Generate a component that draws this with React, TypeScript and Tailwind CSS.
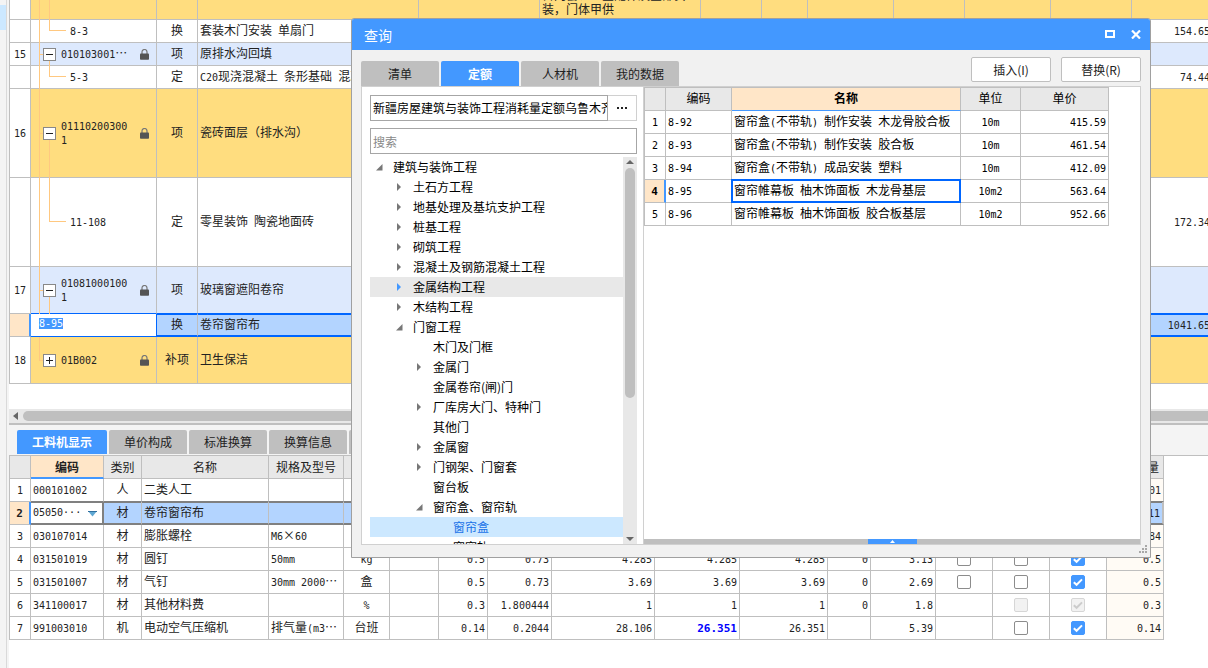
import React, { useEffect, useRef } from "react";
import clsx from "clsx";

type Tree = "guides" | "child" | "group" | "last";

interface BudgetRow {
  no: string;
  code: string;
  kind: string;
  name: string;
  price?: string;
  tree: Tree;
  open?: boolean;
  color: string;
  height: string;
}

const budgetRows: BudgetRow[] = [
  { no: "", code: "8-3", kind: "换", name: "套装木门安装 单扇门", price: "154.65", tree: "child", color: "bg-white", height: "h-[23px]" },
  { no: "15", code: "010103001…", kind: "项", name: "原排水沟回填", tree: "group", open: true, color: "bg-[#dde9fd]", height: "h-[23px]" },
  { no: "", code: "5-3", kind: "定", name: "C20现浇混凝土 条形基础 混凝土", price: "74.44", tree: "child", color: "bg-white", height: "h-[23px]" },
  { no: "16", code: "011102003001", kind: "项", name: "瓷砖面层（排水沟）", tree: "group", open: true, color: "bg-[#ffdd7f]", height: "h-[89px]" },
  { no: "", code: "11-108", kind: "定", name: "零星装饰 陶瓷地面砖", price: "172.34", tree: "child", color: "bg-white", height: "h-[89px]" },
  { no: "17", code: "010810001001", kind: "项", name: "玻璃窗遮阳卷帘", tree: "group", open: true, color: "bg-[#dde9fd]", height: "h-[47px]" },
];

const lastBudgetRow: BudgetRow = {
  no: "18", code: "01B002", kind: "补项", name: "卫生保洁", tree: "last", open: false, color: "bg-[#ffdd7f]", height: "h-[47px]",
};

const treeNodes = [
  { level: 0, label: "建筑与装饰工程", state: "open" },
  { level: 1, label: "土石方工程", state: "closed" },
  { level: 1, label: "地基处理及基坑支护工程", state: "closed" },
  { level: 1, label: "桩基工程", state: "closed" },
  { level: 1, label: "砌筑工程", state: "closed" },
  { level: 1, label: "混凝土及钢筋混凝土工程", state: "closed" },
  { level: 1, label: "金属结构工程", state: "closed", hover: true },
  { level: 1, label: "木结构工程", state: "closed" },
  { level: 1, label: "门窗工程", state: "open" },
  { level: 2, label: "木门及门框", state: "leaf" },
  { level: 2, label: "金属门", state: "closed" },
  { level: 2, label: "金属卷帘(闸)门", state: "leaf" },
  { level: 2, label: "厂库房大门、特种门", state: "closed" },
  { level: 2, label: "其他门", state: "leaf" },
  { level: 2, label: "金属窗", state: "closed" },
  { level: 2, label: "门钢架、门窗套", state: "closed" },
  { level: 2, label: "窗台板", state: "leaf" },
  { level: 2, label: "窗帘盒、窗帘轨", state: "open" },
  { level: 3, label: "窗帘盒", state: "leaf", selected: true },
  { level: 3, label: "窗帘轨", state: "leaf" },
];

const indents = ["pl-[5px]", "pl-[25px]", "pl-[45px]", "pl-[65px]"];

const quotaRows = [
  { code: "8-92", name: "窗帘盒(不带轨) 制作安装 木龙骨胶合板", unit: "10m", price: "415.59" },
  { code: "8-93", name: "窗帘盒(不带轨) 制作安装 胶合板", unit: "10m", price: "461.54" },
  { code: "8-94", name: "窗帘盒(不带轨) 成品安装 塑料", unit: "10m", price: "412.09" },
  { code: "8-95", name: "窗帘帷幕板 柚木饰面板 木龙骨基层", unit: "10m2", price: "563.64" },
  { code: "8-96", name: "窗帘帷幕板 柚木饰面板 胶合板基层", unit: "10m2", price: "952.66" },
];

const materialHeaders = [
  "编码", "类别", "名称", "规格及型号", "单位", "损耗率", "含量", "数量", "含税预算价",
  "不含税市场价", "含税市场价", "税率", "合价", "是否暂估", "锁定数量", "是否计价", "原始含量",
];

// numbers: 含量 .. 合价; checks: "" none, 0 off, 1 on, d0 / d1 disabled
const materialRows = [
  { code: "000101002", kind: "人", name: "二类人工", spec: "", unit: "工日", nums: ["", "", "", "", "", "", ""], checks: ["", "0", "1"], origin: "1.01" },
  { code: "05050···", kind: "材", name: "卷帘窗帘布", spec: "", unit: "m2", nums: ["", "", "", "", "", "", ""], checks: ["0", "0", "1"], origin: "1.11" },
  { code: "030107014", kind: "材", name: "膨胀螺栓", spec: "M6×60", unit: "套", nums: ["", "", "", "", "", "", ""], checks: ["0", "0", "1"], origin: "1.84" },
  { code: "031501019", kind: "材", name: "圆钉", spec: "50mm", unit: "kg", nums: ["0.5", "0.73", "4.285", "4.285", "4.285", "0", "3.13"], checks: ["0", "0", "1"], origin: "0.5" },
  { code: "031501007", kind: "材", name: "气钉", spec: "30mm 2000…", unit: "盒", nums: ["0.5", "0.73", "3.69", "3.69", "3.69", "0", "2.69"], checks: ["0", "0", "1"], origin: "0.5" },
  { code: "341100017", kind: "材", name: "其他材料费", spec: "", unit: "%", nums: ["0.3", "1.800444", "1", "1", "1", "0", "1.8"], checks: ["", "d0", "d1"], origin: "0.3" },
  { code: "991003010", kind: "机", name: "电动空气压缩机", spec: "排气量(m3…", unit: "台班", nums: ["0.14", "0.2044", "28.106", "26.351", "26.351", "", "5.39"], checks: ["", "0", "1"], origin: "0.14" },
];

const cell = "border-r border-b border-[#bfbfbf] p-0 pb-[3px]";
const mono = "font-['DejaVu_Sans_Mono','Noto_Sans_CJK_SC',monospace]";

// Half-width characters take half of a Chinese character, as in the grid's own font
const Txt: React.FC<{ children: string; className?: string; strong?: boolean }> = ({ children, className, strong }) => (
  <span className={className}>
    {children
      .split(/([\x20-\x7e]+)/)
      .filter(Boolean)
      .map((run, i) =>
        /^[\x20-\x7e]/.test(run) ? (
          <span key={i} className={clsx(mono, "whitespace-pre-wrap leading-none", strong ? "text-[11px] font-bold" : "text-[10px]")}>
            {run}
          </span>
        ) : (
          <span key={i}>{run}</span>
        )
      )}
  </span>
);

const Lock: React.FC = () => (
  <svg width="9" height="11" viewBox="0 0 9 11" className="ml-auto mr-[7px] shrink-0">
    <path d="M2 5V3a2.5 2.5 0 0 1 5 0v2" fill="none" stroke="#777" strokeWidth="1.2" />
    <rect x="0" y="4.6" width="9" height="6.2" rx="0.8" fill="#555" />
  </svg>
);

const Guides: React.FC<{ tree: Tree }> = ({ tree }) => {
  const line = "absolute border-[#ffc880]";
  return (
    <>
      <span className={clsx(line, "left-2 top-0 border-l", tree === "last" ? "bottom-1/2" : "bottom-[-1px]")} />
      {tree === "guides" && <span className={clsx(line, "left-[18px] top-0 bottom-[-1px] border-l")} />}
      {tree === "child" && <span className={clsx(line, "left-[18px] top-0 bottom-1/2 w-[17px] border-l border-b")} />}
      {tree === "group" && <span className={clsx(line, "left-[18px] top-1/2 bottom-[-1px] border-l")} />}
      {(tree === "group" || tree === "last") && <span className={clsx(line, "left-2 top-1/2 w-[5px] border-t")} />}
    </>
  );
};

const BudgetLine: React.FC<{ row: BudgetRow; accent?: boolean }> = ({ row, accent }) => {
  const edge = clsx("border-r border-b border-[#bfbfbf] p-0", row.color, accent && "border-b-[#06f]");
  const td = clsx(edge, "pb-[3px]");
  return (
    <tr className={row.height}>
      <td className="border-x border-b border-[#bfbfbf] bg-white p-0 pb-[2px] text-center"><Txt>{row.no}</Txt></td>
      <td className={clsx(edge, "relative")}>
        <Guides tree={row.tree} />
        {row.tree === "child" ? (
          <div className="pb-[3px] pl-[39px]"><Txt>{row.code}</Txt></div>
        ) : (
          <div className="flex items-center pl-3">
            <button className="relative flex h-[13px] w-[13px] shrink-0 items-center justify-center border border-[#888] bg-white" aria-label={row.open ? "折叠" : "展开"}>
              <svg width="7" height="7" viewBox="0 0 7 7">
                <path d={row.open ? "M0 3.5h7" : "M0 3.5h7M3.5 0v7"} stroke="#222" />
              </svg>
            </button>
            <Txt className="ml-[5px] max-w-[72px] break-all pb-[3px]">{row.code}</Txt>
            <Lock />
          </div>
        )}
      </td>
      <td className={clsx(td, "text-center")}>{row.kind}</td>
      <td className={clsx(td, "overflow-hidden whitespace-nowrap pl-[2px]")}><Txt>{row.name}</Txt></td>
      {Array.from({ length: 8 }, (_, i) => <td key={i} className={td} />)}
      <td className={clsx(td, "pr-[3px] text-right")}><Txt>{row.price ?? ""}</Txt></td>
    </tr>
  );
};

const BudgetTable: React.FC = () => {
  const editor = useRef<HTMLInputElement | null>(null);

  useEffect(() => {
    editor.current?.focus();
    editor.current?.select();
  }, []);

  const yellow = clsx(cell, "bg-[#ffdd7f]");
  const active = "border-r border-r-[#bfbfbf] border-b-2 border-b-[#06f] bg-[#b3d4ff] p-0 pb-px shadow-[inset_0_1px_0_#06f]";

  return (
    <div className="overflow-hidden">
      <table className="w-[1205px] table-fixed border-separate border-spacing-0">
        <colgroup>
          <col className="w-[22px]" />
          <col className="w-[126px]" />
          <col className="w-[41px]" />
          <col className="w-[221px]" />
          <col className="w-[121px]" />
          <col className="w-[161px]" />
          <col className="w-[61px]" />
          <col className="w-[46px]" />
          <col className="w-[86px]" />
          <col className="w-[71px]" />
          <col className="w-[86px]" />
          <col className="w-[81px]" />
          <col className="w-[82px]" />
        </colgroup>
        <tbody>
          <tr className="h-5">
            <td className={clsx(cell, "border-l bg-white")} />
            <td className={clsx(yellow, "relative")}><Guides tree="guides" /></td>
            <td className={yellow} />
            <td className={yellow} />
            <td className={yellow} />
            <td className="border-r border-b border-[#bfbfbf] bg-[#ffdd7f] p-0">
              <div className="flex h-[19px] items-end overflow-hidden pb-[3px] pl-[2px]">
                <span>含门套、五金配件及全部安装，门体甲供</span>
              </div>
            </td>
            {Array.from({ length: 7 }, (_, i) => <td key={i} className={yellow} />)}
          </tr>
          {budgetRows.map((row, i) => (
            <BudgetLine key={i} row={row} accent={i === budgetRows.length - 1} />
          ))}
          <tr className="h-[23px]">
            <td className="border-l border-r-2 border-b border-[#bfbfbf] border-r-[#4398ff] bg-[#ffe6c8] p-0" />
            <td className="border-r border-b border-[#06f] bg-white p-0 align-top">
              <input
                ref={editor}
                defaultValue="8-95"
                aria-label="编码"
                className={clsx(mono, "block h-[18px] w-full bg-white pl-2 text-[10px] leading-[14px] text-[#222] outline-none selection:bg-[#4398ff] selection:text-white")}
              />
            </td>
            <td className={clsx(active, "text-center")}>换</td>
            <td className={clsx(active, "pl-[2px]")}>卷帘窗帘布</td>
            {Array.from({ length: 8 }, (_, i) => <td key={i} className={active} />)}
            <td className={clsx(active, "pr-[3px] text-right")}><Txt>1041.65</Txt></td>
          </tr>
          <BudgetLine row={lastBudgetRow} />
        </tbody>
      </table>
    </div>
  );
};

const Check: React.FC<{ state: string; label: string }> = ({ state, label }) => {
  if (!state) return null;
  const on = state.endsWith("1");
  const disabled = state.startsWith("d");
  return (
    <span className="relative mx-auto block h-[14px] w-[14px]">
      <input
        type="checkbox"
        aria-label={label}
        defaultChecked={on}
        disabled={disabled}
        className="block h-[14px] w-[14px] appearance-none rounded-[2px] border border-[#8c8c8c] bg-white checked:border-[#4398ff] checked:bg-[#4398ff] disabled:border-[#d6d6d6] disabled:bg-[#f2f2f2]"
      />
      {on && (
        <svg width="14" height="14" viewBox="0 0 14 14" className="pointer-events-none absolute left-0 top-0">
          <path d="M2.8 7.2l2.8 2.6 5.4-5.4" fill="none" stroke={disabled ? "#ccc" : "#fff"} strokeWidth="2" />
        </svg>
      )}
    </span>
  );
};

const MaterialTable: React.FC = () => (
  <table className="w-[1155px] table-fixed border-separate border-spacing-0">
    <colgroup>
      <col className="w-[22px]" />
      <col className="w-[73px]" />
      <col className="w-[38px]" />
      <col className="w-[127px]" />
      <col className="w-[75px]" />
      <col className="w-[46px]" />
      <col className="w-[49px]" />
      <col className="w-[49px]" />
      <col className="w-[64px]" />
      <col className="w-[103px]" />
      <col className="w-[85px]" />
      <col className="w-[88px]" />
      <col className="w-[43px]" />
      <col className="w-[65px]" />
      <col className="w-[57px]" />
      <col className="w-[57px]" />
      <col className="w-[57px]" />
      <col className="w-[57px]" />
    </colgroup>
    <thead>
      <tr className="h-[23px]">
        <th className={clsx(cell, "border-l bg-[#e8e8e8]")} />
        {materialHeaders.map((title, i) => (
          <th
            key={title}
            className={clsx(
              "overflow-hidden whitespace-nowrap border-r border-[#bfbfbf] p-0",
              i === 0 ? "border-b-2 border-b-[#4398ff] bg-[#ffe6c8] font-bold" : "border-b bg-[#e8e8e8] font-normal"
            )}
          >
            {title}
          </th>
        ))}
      </tr>
    </thead>
    <tbody>
      {materialRows.map((row, i) => {
        const current = i === 1;
        const td = clsx(
          "border-r border-r-[#bfbfbf] p-0",
          current ? "border-b-2 border-b-[#808080] bg-[#b3d4ff] pb-px shadow-[inset_0_1px_0_#808080]" : "border-b pb-[3px]",
          !current && (i === 0 ? "border-b-[#808080]" : "border-b-[#bfbfbf]")
        );
        return (
          <tr key={row.code} className="h-[23px]">
            <td
              className={clsx(
                "border-l border-b border-[#bfbfbf] p-0 pb-[2px] text-center",
                current ? "border-r-2 border-r-[#4398ff] bg-[#ffe6c8]" : "border-r"
              )}
            >
              <Txt strong={current}>{String(i + 1)}</Txt>
            </td>
            {current ? (
              <td className="relative border-t border-r-2 border-b-2 border-[#808080] bg-white p-0">
                <select aria-label="材料编码" className={clsx(mono, "block h-5 w-full appearance-none bg-white pb-px pl-[2px] text-[10px] text-[#222] outline-none")}>
                  <option>{row.code}</option>
                </select>
                <svg width="9" height="6" viewBox="0 0 9 6" className="pointer-events-none absolute right-[5px] top-2">
                  <path d="M0 0h9L4.500 5.500z" fill="#5fa8d3" />
                  <path d="M0 0h9v1H0z" fill="#2f6f9f" />
                </svg>
              </td>
            ) : (
              <td className={clsx(td, "pl-[2px]")}><Txt>{row.code}</Txt></td>
            )}
            <td className={clsx(td, "text-center")}>{row.kind}</td>
            <td className={clsx(td, "pl-[2px]")}>{row.name}</td>
            <td className={clsx(td, "whitespace-nowrap pl-[2px]")}><Txt>{row.spec}</Txt></td>
            <td className={clsx(td, "text-center")}><Txt>{row.unit}</Txt></td>
            <td className={td} />
            {row.nums.map((n, k) => (
              <td key={k} className={clsx(td, "pr-[2px] text-right", i === 6 && k === 3 && "text-[#00f]")}>
                <Txt strong={i === 6 && k === 3}>{n}</Txt>
              </td>
            ))}
            {row.checks.map((state, k) => (
              <td key={k} className={clsx(td, "pb-px")}><Check state={state} label={row.name + materialHeaders[13 + k]} /></td>
            ))}
            <td className={clsx(td, "pr-[2px] text-right", current ? "border-r-2 border-r-[#808080]" : "bg-[#fffbf5]")}>
              <Txt>{row.origin}</Txt>
            </td>
          </tr>
        );
      })}
    </tbody>
  </table>
);

const TreeArrow: React.FC<{ state: string; hover?: boolean }> = ({ state, hover }) => (
  <svg width="8" height="8" viewBox="0 0 8 8" className="mr-[10px] shrink-0">
    {state === "open" && <path d="M7.500 1v6.500H1z" fill="#777" />}
    {state === "closed" && <path d="M2 0v8l4-4z" fill={hover ? "#4398ff" : "#777"} />}
  </svg>
);

const QueryDialog: React.FC = () => (
  <div role="dialog" aria-label="查询" className="absolute left-[351px] top-[18px] flex h-[540px] w-[800px] flex-col rounded-t-[3px] border border-[#a0a0a0] bg-[#f1f1f1]">
    <div className="flex h-[31px] shrink-0 items-center rounded-t-[2px] bg-[#4398ff] pl-3 pr-[9px] text-white">
      <h1 className="mr-auto pt-px text-[14px]">查询</h1>
      <button aria-label="最大化" className="mr-4">
        <svg width="10" height="8" viewBox="0 0 10 8" className="mb-px">
          <rect x="1" y="1" width="8" height="6" fill="none" stroke="#fff" strokeWidth="2" />
        </svg>
      </button>
      <button aria-label="关闭">
        <svg width="10" height="9" viewBox="0 0 10 9">
          <path d="M1 0.500l8 8M9 0.500l-8 8" stroke="#fff" strokeWidth="2.200" />
        </svg>
      </button>
    </div>

    <div className="flex h-9 shrink-0 items-end gap-[2px] px-[9px]">
      {["清单", "定额", "人材机", "我的数据"].map((tab) => (
        <button
          key={tab}
          className={clsx(
            "h-[25px] w-[78px] rounded-t-[2px]",
            tab === "定额" ? "bg-[#4398ff] font-bold text-white" : "bg-[#bfbfbf] text-[#222]"
          )}
        >
          {tab}
        </button>
      ))}
      <div className="mb-1 ml-auto flex gap-[10px]">
        <button className="h-[25px] w-20 rounded-[2px] border border-[#bfbfbf] bg-white">插入(I)</button>
        <button className="h-[25px] w-20 rounded-[2px] border border-[#bfbfbf] bg-white">替换(R)</button>
      </div>
    </div>

    <div className="mx-[9px] mb-3 flex min-h-0 flex-1 border border-[#d0d0d0] bg-white text-black">
      <div className="flex w-[282px] shrink-0 flex-col border-r border-[#d0d0d0] pl-2 pr-[6px] pt-2">
        <div className="flex h-[26px] shrink-0">
          <input
            aria-label="定额库"
            defaultValue="新疆房屋建筑与装饰工程消耗量定额乌鲁木齐估价表"
            className="min-w-0 flex-1 border border-[#a6a6a6] pl-[2px] outline-none"
          />
          <button aria-label="选择定额库" className="flex w-[29px] items-center justify-center border border-l-0 border-[#d0d0d0]">
            <svg width="10" height="2" viewBox="0 0 10 2"><path d="M0 0h2v2H0zM4 0h2v2H4zM8 0h2v2H8z" fill="#222" /></svg>
          </button>
        </div>
        <input
          aria-label="搜索"
          placeholder="搜索"
          className="mt-[7px] h-[26px] shrink-0 border border-[#a6a6a6] pl-[2px] outline-none placeholder:text-[#888]"
        />
        <div className="mt-[3px] flex min-h-0 flex-1">
          <ul className="min-w-0 flex-1 overflow-hidden">
            {treeNodes.map((node) => (
              <li
                key={node.label}
                className={clsx(
                  "flex h-5 items-center",
                  indents[node.level],
                  node.hover && "bg-[#e8e8e8]",
                  node.selected && "bg-[#cce8ff] text-[#1a73e8]"
                )}
              >
                <TreeArrow state={node.state} hover={node.hover} />
                {node.label}
              </li>
            ))}
          </ul>
          <div className="flex w-[14px] flex-col items-center justify-between bg-[#e8e8e8] py-[3px]">
            <svg width="8" height="4" viewBox="0 0 8 4"><path d="M0 4h8L4 0z" fill="#666" /></svg>
            <div className="mb-auto mt-1 h-[230px] w-[10px] rounded-full bg-[#bfbfbf]" />
            <svg width="8" height="4" viewBox="0 0 8 4"><path d="M0 0h8L4 4z" fill="#666" /></svg>
          </div>
        </div>
      </div>

      <div className="flex min-w-0 flex-1 flex-col">
        <table className="w-[465px] table-fixed border-separate border-spacing-0">
          <colgroup>
            <col className="w-[22px]" />
            <col className="w-[66px]" />
            <col className="w-[229px]" />
            <col className="w-[60px]" />
            <col className="w-[88px]" />
          </colgroup>
          <thead>
            <tr className="h-6">
              <th className={clsx(cell, "border-l border-t bg-[#e8e8e8]")} />
              <th className={clsx(cell, "border-t bg-[#e8e8e8] font-normal")}>编码</th>
              <th className={clsx(cell, "border-t border-b-[#4398ff] bg-[#ffe6c8] font-bold")}>名称</th>
              <th className={clsx(cell, "border-t bg-[#e8e8e8] font-normal")}>单位</th>
              <th className={clsx(cell, "border-t bg-[#e8e8e8] font-normal")}>单价</th>
            </tr>
          </thead>
          <tbody>
            {quotaRows.map((row, i) => (
              <tr key={row.code} className="h-[23px]">
                <td
                  className={clsx(
                    "border-l border-b border-[#bfbfbf] p-0 pb-[2px] text-center",
                    i === 3 ? "border-r-2 border-r-[#4398ff] bg-[#ffe6c8]" : "border-r"
                  )}
                >
                  <Txt strong={i === 3}>{String(i + 1)}</Txt>
                </td>
                <td className={clsx(cell, "pl-[2px]")}><Txt>{row.code}</Txt></td>
                <td className={clsx(cell, "relative whitespace-nowrap pl-[2px]")}>
                  <Txt>{row.name}</Txt>
                  {i === 3 && <span className="absolute -inset-px border-2 border-[#06f]" />}
                </td>
                <td className={clsx(cell, "text-center")}><Txt>{row.unit}</Txt></td>
                <td className={clsx(cell, "pr-[2px] text-right")}><Txt>{row.price}</Txt></td>
              </tr>
            ))}
          </tbody>
        </table>
        <div className="mt-auto flex h-[5px] justify-center bg-[#bfbfbf]">
          <button aria-label="展开" className="flex w-[49px] items-center justify-center bg-[#4398ff]">
            <svg width="5" height="3" viewBox="0 0 5 3"><path d="M0 3h5L2.500 0z" fill="#fff" /></svg>
          </button>
        </div>
      </div>
    </div>

    <svg width="9" height="9" viewBox="0 0 9 9" className="absolute bottom-[3px] right-[2px]">
      <path d="M6 0h2v2H6zM3 3h2v2H3zM6 3h2v2H6zM0 6h2v2H0zM3 6h2v2H3zM6 6h2v2H6z" fill="#a8a8a8" />
    </svg>
  </div>
);

const App: React.FC = () => (
  <div lang="zh-CN" className="relative flex min-h-screen overflow-hidden bg-white font-['Noto_Sans_CJK_SC',sans-serif] text-[12px] leading-[14px] text-[#222]">
    <div className="w-[9px] shrink-0 bg-[#f4f4f4] pr-[2px]">
      <div className="h-full border-r border-[#d9d9d9] pt-[5px]">
        <div className="h-[25px] bg-[#cce8ff]" />
      </div>
    </div>

    <div className="min-w-0 flex-1">
      <BudgetTable />
      <div className="mt-[25px] flex h-[14px] items-center gap-[5px] bg-[#e8e8e8] pl-1">
        <svg width="5" height="8" viewBox="0 0 5 8" className="shrink-0"><path d="M5 0v8L0 4z" fill="#666" /></svg>
        <div className="-mr-2 h-[10px] flex-1 rounded-full bg-[#bfbfbf]" />
      </div>
      <div className="flex h-[33px] gap-[2px] border-t-2 border-b border-[#bfbfbf] bg-[#f4f4f4] pl-2 pt-[5px]">
        {["工料机显示", "单价构成", "标准换算", "换算信息", "安装费用"].map((tab, i) => (
          <button
            key={tab}
            className={clsx(
              "h-6 rounded-t-[2px]",
              i === 0 ? "w-[90px] bg-[#4398ff] font-bold text-white" : "w-[78px] bg-[#bfbfbf] text-[#222]"
            )}
          >
            {tab}
          </button>
        ))}
      </div>
      <MaterialTable />
    </div>

    <QueryDialog />
  </div>
);

export default App;
